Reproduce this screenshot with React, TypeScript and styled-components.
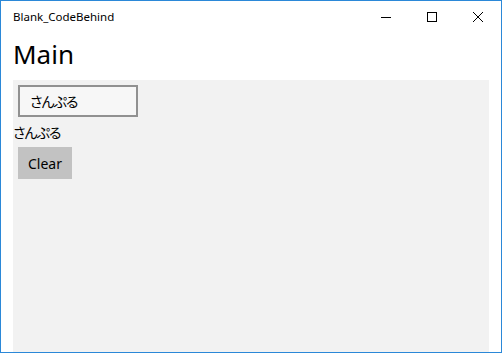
import React, {useState} from 'react';
import styled, {createGlobalStyle} from 'styled-components';

const GlobalStyle = createGlobalStyle`
  html, body {
    margin: 0;
    padding: 0;
    background: #ffffff;
  }
  * {
    box-sizing: border-box;
  }
`;

const Window = styled.div`
  width: 502px;
  height: 353px;
  border: 1px solid #2b88d8;
  background: #ffffff;
  display: flex;
  flex-direction: column;
  font-family: "Noto Sans", "Noto Sans CJK JP", sans-serif;
  color: #000000;
`;

const TitleBar = styled.div`
  height: 31px;
  display: flex;
  align-items: center;
  flex-shrink: 0;
`;

const Title = styled.div`
  flex: 1;
  padding-left: 12px;
  font-size: 11.5px;
  line-height: 16px;
  padding-top: 1px;
`;

const Caption = styled.div`
  width: 46px;
  height: 31px;
  display: flex;
  align-items: center;
  justify-content: center;
`;

const Page = styled.div`
  flex: 1;
  display: flex;
  flex-direction: column;
  padding: 0 12px;
  min-height: 0;
`;

const Heading = styled.h1`
  margin: 0;
  height: 48px;
  font-size: 26px;
  font-weight: 400;
  line-height: 44px;
`;

const Panel = styled.div`
  flex: 1;
  background: #f2f2f2;
  display: flex;
  flex-direction: column;
  align-items: flex-start;
`;

const TextBox = styled.input`
  margin: 5px;
  width: 120px;
  height: 32px;
  border: 2px solid #919191;
  background: #f7f7f7;
  padding: 0 10px;
  font-family: "Noto Sans CJK JP", sans-serif;
  font-feature-settings: "palt";
  letter-spacing: -1px;
  font-size: 14px;
  color: #000000;
  outline: none;
`;

const Label = styled.div`
  height: 20px;
  line-height: 20px;
  font-family: "Noto Sans CJK JP", sans-serif;
  font-feature-settings: "palt";
  letter-spacing: -1px;
  font-size: 14px;
`;

const Button = styled.button`
  margin: 5px;
  width: 54px;
  height: 32px;
  border: none;
  background: #c2c2c2;
  font-family: "Noto Sans", sans-serif;
  font-size: 14px;
  color: #000000;
  padding: 0;
`;

const App: React.FC = () => {
    const [text, setText] = useState('さんぷる');

    return (
        <Window>
            <GlobalStyle/>
            <TitleBar>
                <Title>Blank_CodeBehind</Title>
                <Caption>
                    <svg width="10" height="10" viewBox="0 0 10 10">
                        <path d="M0 5.5H10" stroke="#000" strokeWidth="1"/>
                    </svg>
                </Caption>
                <Caption>
                    <svg width="10" height="10" viewBox="0 0 10 10">
                        <rect x="0.5" y="0.5" width="9" height="9" fill="none" stroke="#000" strokeWidth="1"/>
                    </svg>
                </Caption>
                <Caption>
                    <svg width="10" height="10" viewBox="0 0 10 10">
                        <path d="M0 0L10 10M10 0L0 10" stroke="#000" strokeWidth="1"/>
                    </svg>
                </Caption>
            </TitleBar>
            <Page>
                <Heading>Main</Heading>
                <Panel>
                    <TextBox value={text} onChange={e => setText(e.target.value)}/>
                    <Label>{text}</Label>
                    <Button onClick={() => setText('')}>Clear</Button>
                </Panel>
            </Page>
        </Window>
    );
};

export default App;
